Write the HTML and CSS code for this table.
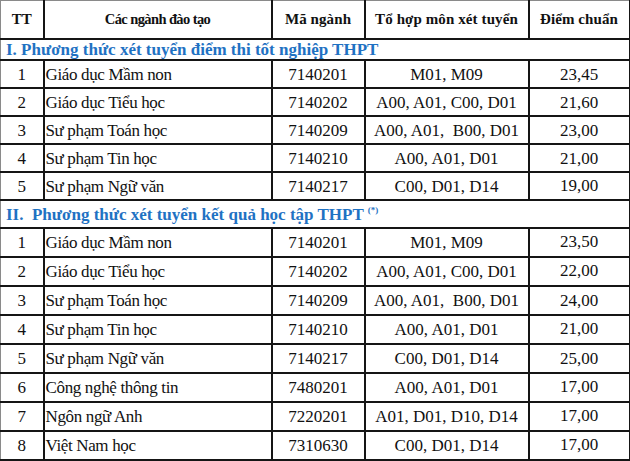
FILE: index.html
```html
<!DOCTYPE html>
<html lang="vi">
<head>
<meta charset="utf-8">
<link rel="stylesheet" href="styles.css">
</head>
<body>
<table class="scores">
  <colgroup>
    <col class="c-tt"><col class="c-name"><col class="c-code"><col class="c-combo"><col class="c-score">
  </colgroup>
  <thead>
    <tr class="head">
      <th class="h-tt">TT</th>
      <th class="h-name">Các ngành đào tạo</th>
      <th class="h-code">Mã ngành</th>
      <th>Tổ hợp môn xét tuyển</th>
      <th>Điểm chuẩn</th>
    </tr>
  </thead>
  <tbody>
    <tr class="section s1"><td colspan="5">I. Phương thức xét tuyển điểm thi tốt nghiệp THPT</td></tr>
    <tr class="r1"><td class="tt">1</td><td class="name">Giáo dục Mầm non</td><td class="code">7140201</td><td class="combo">M01, M09</td><td class="score">23,45</td></tr>
    <tr class="r1"><td class="tt">2</td><td class="name">Giáo dục Tiểu học</td><td class="code">7140202</td><td class="combo">A00, A01, C00, D01</td><td class="score">21,60</td></tr>
    <tr class="r1"><td class="tt">3</td><td class="name">Sư phạm Toán học</td><td class="code">7140209</td><td class="combo">A00, A01,&nbsp; B00, D01</td><td class="score">23,00</td></tr>
    <tr class="r1"><td class="tt">4</td><td class="name">Sư phạm Tin học</td><td class="code">7140210</td><td class="combo">A00, A01, D01</td><td class="score">21,00</td></tr>
    <tr class="r1"><td class="tt">5</td><td class="name">Sư phạm Ngữ văn</td><td class="code">7140217</td><td class="combo">C00, D01, D14</td><td class="score up">19,00</td></tr>
    <tr class="section s2"><td colspan="5">II.&nbsp; Phương thức xét tuyển kết quả học tập THPT <sup>(*)</sup></td></tr>
    <tr class="r2"><td class="tt">1</td><td class="name">Giáo dục Mầm non</td><td class="code">7140201</td><td class="combo">M01, M09</td><td class="score up">23,50</td></tr>
    <tr class="r2"><td class="tt">2</td><td class="name">Giáo dục Tiểu học</td><td class="code">7140202</td><td class="combo">A00, A01, C00, D01</td><td class="score up">22,00</td></tr>
    <tr class="r2"><td class="tt">3</td><td class="name">Sư phạm Toán học</td><td class="code">7140209</td><td class="combo">A00, A01,&nbsp; B00, D01</td><td class="score">24,00</td></tr>
    <tr class="r2"><td class="tt">4</td><td class="name">Sư phạm Tin học</td><td class="code">7140210</td><td class="combo">A00, A01, D01</td><td class="score up">21,00</td></tr>
    <tr class="r2"><td class="tt">5</td><td class="name">Sư phạm Ngữ văn</td><td class="code">7140217</td><td class="combo">C00, D01, D14</td><td class="score">25,00</td></tr>
    <tr class="r2"><td class="tt">6</td><td class="name">Công nghệ thông tin</td><td class="code">7480201</td><td class="combo">A00, A01, D01</td><td class="score up">17,00</td></tr>
    <tr class="r2"><td class="tt">7</td><td class="name">Ngôn ngữ Anh</td><td class="code">7220201</td><td class="combo">A01, D01, D10, D14</td><td class="score up">17,00</td></tr>
    <tr class="r2"><td class="tt">8</td><td class="name">Việt Nam học</td><td class="code">7310630</td><td class="combo">C00, D01, D14</td><td class="score up">17,00</td></tr>
  </tbody>
</table>
</body>
</html>
```
FILE: styles.css
```css
html, body {
  margin: 0;
  padding: 0;
  background: #ffffff;
}

.scores {
  border-collapse: collapse;
  table-layout: fixed;
  width: 629px;
  font-family: "Liberation Serif", "Times New Roman", serif;
  color: #111111;
  font-size: 17px;
}

.c-tt { width: 43px; }
.c-name { width: 228px; }
.c-code { width: 93px; }
.c-combo { width: 164px; }
.c-score { width: 101px; }

.scores th,
.scores td {
  border: 2px solid #151515;
  padding: 0;
  line-height: 1;
}

.scores tr:first-child th {
  border-top: 1px solid #8a8a8a;
}
.scores tr th:first-child,
.scores tr td:first-child {
  border-left: 1px solid #8a8a8a;
}

.head th {
  height: 37px;
  font-size: 15px;
  font-weight: bold;
  text-align: center;
  vertical-align: middle;
  letter-spacing: 0.1px;
}

.head .h-name {
  letter-spacing: -0.6px;
  font-size: 14.5px;
}

.section td {
  color: #1f72c3;
  font-weight: bold;
  font-size: 17px;
  text-align: left;
  padding-left: 5px;
  letter-spacing: 0;
}

.s1 td { height: 19px; }
.s2 td { height: 26px; }

.section sup {
  font-size: 9px;
  vertical-align: 7px;
  line-height: 0;
}

.r1 td { height: 26px; }
.r2 td { height: 27px; }

.tt { text-align: center; }
.scores td.name { padding-left: 1px; letter-spacing: -0.35px; }
.code { text-align: center; }
.combo { text-align: center; }
.score { text-align: center; }
.scores td.score.up { vertical-align: top; padding-top: 4px; }
.scores .r1 td.score.up { height: 22px; }
.scores .r2 td.score.up { height: 23px; }
```
